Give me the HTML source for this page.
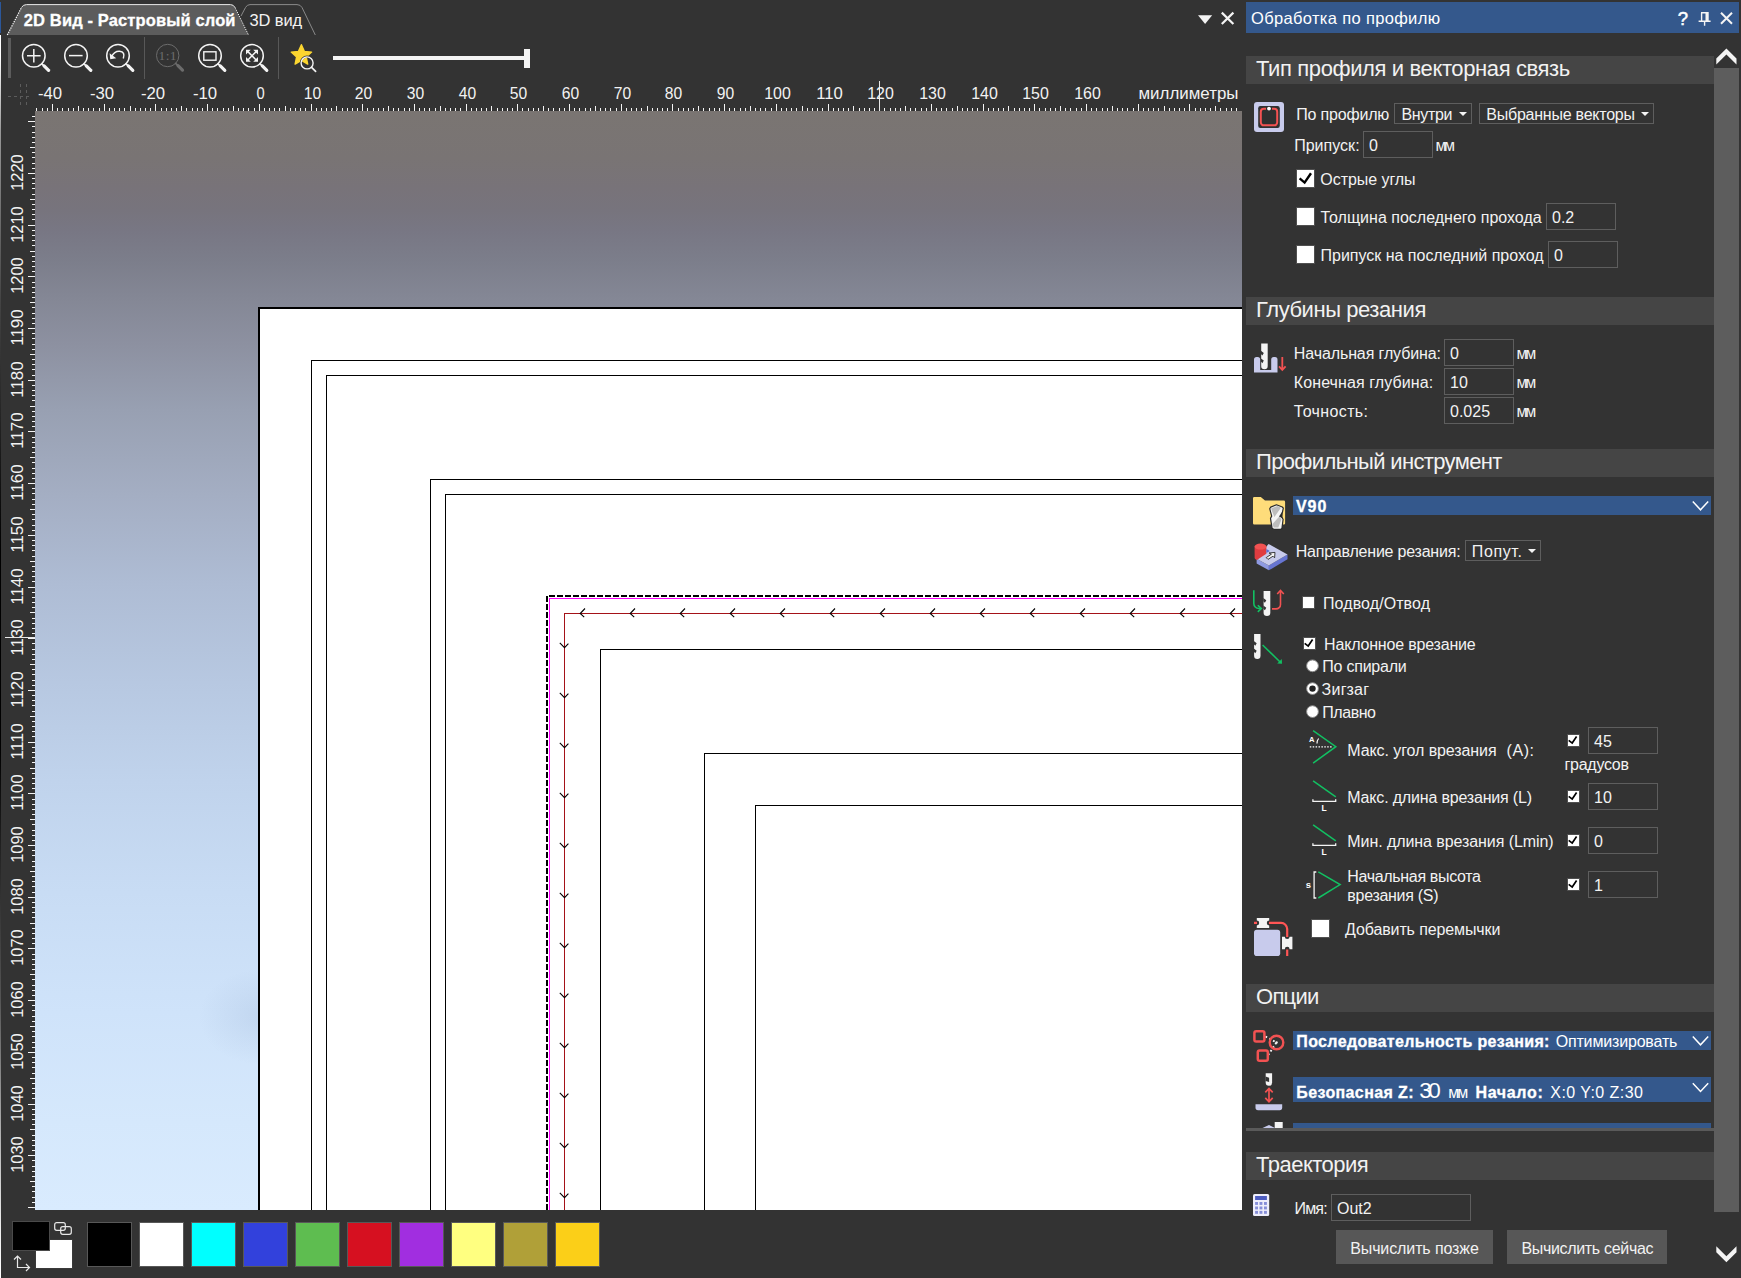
<!DOCTYPE html><html lang="ru"><head><meta charset="utf-8"><title>Обработка по профилю</title><style>html,body{margin:0;padding:0}
body{width:1741px;height:1278px;background:#333;overflow:hidden;position:relative;font-family:"Liberation Sans",sans-serif;color:#f2f2f2}
.abs,div,.t{position:absolute}
.t{white-space:pre;line-height:1;display:block}
div{box-sizing:border-box}
</style></head><body><div class="abs" style="left:35px;top:111px;width:1207px;height:1099px;overflow:hidden;background:radial-gradient(ellipse 62px 48px at 226px 906px,rgba(110,135,175,.14),rgba(110,135,175,0) 100%),linear-gradient(180deg,#7a7572 0%,#797474 4.3%,#787379 7%,#77747d 9%,#787784 11%,#7c7e8b 13.7%,#848795 17%,#8d91a1 21.4%,#98a0b2 27.2%,#a4aec3 35%,#aebcd4 43%,#b7c8e1 52%,#c0d3ec 61%,#c8dcf4 71%,#cfe3fa 82%,#d5e8fc 92%,#d9ebfe 100%)"><svg width="1207" height="1099" style="position:absolute;left:0;top:0"><rect x="223" y="196" width="1207" height="1099" fill="#000"/><rect x="225" y="198" width="1207" height="1099" fill="#fff"/><path d="M276.5 1099V249.5H1207M291.5 1099V264.5H1207M395.5 1099V368.5H1207M410.5 1099V383.5H1207M565.5 1099V538.5H1207M669.5 1099V642.5H1207M720.5 1099V694.5H1207" stroke="#000" fill="none" stroke-width="1" shape-rendering="crispEdges"/><path d="M512 485V1099" stroke="#000" stroke-width="2" stroke-dasharray="6 2" fill="none" shape-rendering="crispEdges"/><path d="M514 485H1207" stroke="#000" stroke-width="2" stroke-dasharray="6 2" fill="none" shape-rendering="crispEdges"/><path d="M514.5 1099V487.5H1207" stroke="#ff00ff" stroke-width="1" fill="none" shape-rendering="crispEdges"/><path d="M529.5 1099V502.5H1207" stroke="#a41218" stroke-width="1" fill="none" shape-rendering="crispEdges"/><path d="M550 497.5L545.2 502.5L549.2 506.2M600 497.5L595.2 502.5L599.2 506.2M650 497.5L645.2 502.5L649.2 506.2M700 497.5L695.2 502.5L699.2 506.2M750 497.5L745.2 502.5L749.2 506.2M800 497.5L795.2 502.5L799.2 506.2M850 497.5L845.2 502.5L849.2 506.2M900 497.5L895.2 502.5L899.2 506.2M950 497.5L945.2 502.5L949.2 506.2M1000 497.5L995.2 502.5L999.2 506.2M1050 497.5L1045.2 502.5L1049.2 506.2M1100 497.5L1095.2 502.5L1099.2 506.2M1150 497.5L1145.2 502.5L1149.2 506.2M1200 497.5L1195.2 502.5L1199.2 506.2M524.8 531.8L529.5 536.6L533.4 532.6M524.8 581.8L529.5 586.6L533.4 582.6M524.8 631.8L529.5 636.6L533.4 632.6M524.8 681.8L529.5 686.6L533.4 682.6M524.8 731.8L529.5 736.6L533.4 732.6M524.8 781.8L529.5 786.6L533.4 782.6M524.8 831.8L529.5 836.6L533.4 832.6M524.8 881.8L529.5 886.6L533.4 882.6M524.8 931.8L529.5 936.6L533.4 932.6M524.8 981.8L529.5 986.6L533.4 982.6M524.8 1031.8L529.5 1036.6L533.4 1032.6M524.8 1081.8L529.5 1086.6L533.4 1082.6" stroke="#000" stroke-width="1.1" fill="none"/></svg></div><svg class="abs" style="left:0;top:0" width="1242" height="1212" font-family="'Liberation Sans',sans-serif" font-size="17" fill="#f2f2f2"><path d="M36.5 108v3M42.5 108v3M47.5 108v3M52.5 104v7M57.5 108v3M62.5 108v3M68.5 108v3M73.5 108v3M78.5 106v5M83.5 108v3M88.5 108v3M93.5 108v3M99.5 108v3M104.5 104v7M109.5 108v3M114.5 108v3M119.5 108v3M124.5 108v3M130.5 106v5M135.5 108v3M140.5 108v3M145.5 108v3M150.5 108v3M155.5 104v7M161.5 108v3M166.5 108v3M171.5 108v3M176.5 108v3M181.5 106v5M186.5 108v3M192.5 108v3M197.5 108v3M202.5 108v3M207.5 104v7M212.5 108v3M217.5 108v3M223.5 108v3M228.5 108v3M233.5 106v5M238.5 108v3M243.5 108v3M248.5 108v3M254.5 108v3M259.5 104v7M264.5 108v3M269.5 108v3M274.5 108v3M279.5 108v3M285.5 106v5M290.5 108v3M295.5 108v3M300.5 108v3M305.5 108v3M311.5 104v7M316.5 108v3M321.5 108v3M326.5 108v3M331.5 108v3M336.5 106v5M342.5 108v3M347.5 108v3M352.5 108v3M357.5 108v3M362.5 104v7M367.5 108v3M373.5 108v3M378.5 108v3M383.5 108v3M388.5 106v5M393.5 108v3M398.5 108v3M404.5 108v3M409.5 108v3M414.5 104v7M419.5 108v3M424.5 108v3M429.5 108v3M435.5 108v3M440.5 106v5M445.5 108v3M450.5 108v3M455.5 108v3M460.5 108v3M466.5 104v7M471.5 108v3M476.5 108v3M481.5 108v3M486.5 108v3M491.5 106v5M497.5 108v3M502.5 108v3M507.5 108v3M512.5 108v3M517.5 104v7M522.5 108v3M528.5 108v3M533.5 108v3M538.5 108v3M543.5 106v5M548.5 108v3M553.5 108v3M559.5 108v3M564.5 108v3M569.5 104v7M574.5 108v3M579.5 108v3M585.5 108v3M590.5 108v3M595.5 106v5M600.5 108v3M605.5 108v3M610.5 108v3M616.5 108v3M621.5 104v7M626.5 108v3M631.5 108v3M636.5 108v3M641.5 108v3M647.5 106v5M652.5 108v3M657.5 108v3M662.5 108v3M667.5 108v3M672.5 104v7M678.5 108v3M683.5 108v3M688.5 108v3M693.5 108v3M698.5 106v5M703.5 108v3M709.5 108v3M714.5 108v3M719.5 108v3M724.5 104v7M729.5 108v3M734.5 108v3M740.5 108v3M745.5 108v3M750.5 106v5M755.5 108v3M760.5 108v3M765.5 108v3M771.5 108v3M776.5 104v7M781.5 108v3M786.5 108v3M791.5 108v3M796.5 108v3M802.5 106v5M807.5 108v3M812.5 108v3M817.5 108v3M822.5 108v3M828.5 104v7M833.5 108v3M838.5 108v3M843.5 108v3M848.5 108v3M853.5 106v5M859.5 108v3M864.5 108v3M869.5 108v3M874.5 108v3M879.5 104v7M884.5 108v3M890.5 108v3M895.5 108v3M900.5 108v3M905.5 106v5M910.5 108v3M915.5 108v3M921.5 108v3M926.5 108v3M931.5 104v7M936.5 108v3M941.5 108v3M946.5 108v3M952.5 108v3M957.5 106v5M962.5 108v3M967.5 108v3M972.5 108v3M977.5 108v3M983.5 104v7M988.5 108v3M993.5 108v3M998.5 108v3M1003.5 108v3M1008.5 106v5M1014.5 108v3M1019.5 108v3M1024.5 108v3M1029.5 108v3M1034.5 104v7M1039.5 108v3M1045.5 108v3M1050.5 108v3M1055.5 108v3M1060.5 106v5M1065.5 108v3M1070.5 108v3M1076.5 108v3M1081.5 108v3M1086.5 104v7M1091.5 108v3M1096.5 108v3M1102.5 108v3M1107.5 108v3M1112.5 106v5M1117.5 108v3M1122.5 108v3M1127.5 108v3M1133.5 108v3M1138.5 104v7M1143.5 108v3M1148.5 108v3M1153.5 108v3M1158.5 108v3M1164.5 106v5M1169.5 108v3M1174.5 108v3M1179.5 108v3M1184.5 108v3M1189.5 104v7M1195.5 108v3M1200.5 108v3M1205.5 108v3M1210.5 108v3M1215.5 106v5M1220.5 108v3M1226.5 108v3M1231.5 108v3M1236.5 108v3" stroke="#f4f4f4" stroke-width="1" fill="none" shape-rendering="crispEdges"/><path d="M28 1207.5h7M32 1202.5h3M32 1197.5h3M32 1191.5h3M32 1186.5h3M30 1181.5h5M32 1176.5h3M32 1171.5h3M32 1166.5h3M32 1160.5h3M28 1155.5h7M32 1150.5h3M32 1145.5h3M32 1140.5h3M32 1135.5h3M30 1129.5h5M32 1124.5h3M32 1119.5h3M32 1114.5h3M32 1109.5h3M28 1104.5h7M32 1098.5h3M32 1093.5h3M32 1088.5h3M32 1083.5h3M30 1078.5h5M32 1073.5h3M32 1067.5h3M32 1062.5h3M32 1057.5h3M28 1052.5h7M32 1047.5h3M32 1042.5h3M32 1036.5h3M32 1031.5h3M30 1026.5h5M32 1021.5h3M32 1016.5h3M32 1010.5h3M32 1005.5h3M28 1000.5h7M32 995.5h3M32 990.5h3M32 985.5h3M32 979.5h3M30 974.5h5M32 969.5h3M32 964.5h3M32 959.5h3M32 954.5h3M28 948.5h7M32 943.5h3M32 938.5h3M32 933.5h3M32 928.5h3M30 923.5h5M32 917.5h3M32 912.5h3M32 907.5h3M32 902.5h3M28 897.5h7M32 892.5h3M32 886.5h3M32 881.5h3M32 876.5h3M30 871.5h5M32 866.5h3M32 861.5h3M32 855.5h3M32 850.5h3M28 845.5h7M32 840.5h3M32 835.5h3M32 830.5h3M32 824.5h3M30 819.5h5M32 814.5h3M32 809.5h3M32 804.5h3M32 799.5h3M28 793.5h7M32 788.5h3M32 783.5h3M32 778.5h3M32 773.5h3M30 768.5h5M32 762.5h3M32 757.5h3M32 752.5h3M32 747.5h3M28 742.5h7M32 736.5h3M32 731.5h3M32 726.5h3M32 721.5h3M30 716.5h5M32 711.5h3M32 705.5h3M32 700.5h3M32 695.5h3M28 690.5h7M32 685.5h3M32 680.5h3M32 674.5h3M32 669.5h3M30 664.5h5M32 659.5h3M32 654.5h3M32 649.5h3M32 643.5h3M28 638.5h7M32 633.5h3M32 628.5h3M32 623.5h3M32 618.5h3M30 612.5h5M32 607.5h3M32 602.5h3M32 597.5h3M32 592.5h3M28 587.5h7M32 581.5h3M32 576.5h3M32 571.5h3M32 566.5h3M30 561.5h5M32 556.5h3M32 550.5h3M32 545.5h3M32 540.5h3M28 535.5h7M32 530.5h3M32 525.5h3M32 519.5h3M32 514.5h3M30 509.5h5M32 504.5h3M32 499.5h3M32 493.5h3M32 488.5h3M28 483.5h7M32 478.5h3M32 473.5h3M32 468.5h3M32 462.5h3M30 457.5h5M32 452.5h3M32 447.5h3M32 442.5h3M32 437.5h3M28 431.5h7M32 426.5h3M32 421.5h3M32 416.5h3M32 411.5h3M30 406.5h5M32 400.5h3M32 395.5h3M32 390.5h3M32 385.5h3M28 380.5h7M32 375.5h3M32 369.5h3M32 364.5h3M32 359.5h3M30 354.5h5M32 349.5h3M32 344.5h3M32 338.5h3M32 333.5h3M28 328.5h7M32 323.5h3M32 318.5h3M32 313.5h3M32 307.5h3M30 302.5h5M32 297.5h3M32 292.5h3M32 287.5h3M32 282.5h3M28 276.5h7M32 271.5h3M32 266.5h3M32 261.5h3M32 256.5h3M30 251.5h5M32 245.5h3M32 240.5h3M32 235.5h3M32 230.5h3M28 225.5h7M32 219.5h3M32 214.5h3M32 209.5h3M32 204.5h3M30 199.5h5M32 194.5h3M32 188.5h3M32 183.5h3M32 178.5h3M28 173.5h7M32 168.5h3M32 163.5h3M32 157.5h3M32 152.5h3M30 147.5h5M32 142.5h3M32 137.5h3M32 132.5h3M32 126.5h3M28 121.5h7M32 116.5h3" stroke="#f4f4f4" stroke-width="1" fill="none" shape-rendering="crispEdges"/><path d="M879.5 81v30M5 637.5h30" stroke="#e8e8e8" stroke-width="1" shape-rendering="crispEdges"/><path d="M8 96.5h22M20.5 84v22M26.5 84v22M8 96.5" stroke="#5c5c5c" stroke-width="1" stroke-dasharray="3 3" fill="none" shape-rendering="crispEdges"/><text x="50.0" y="98.6" text-anchor="middle" textLength="24.2" lengthAdjust="spacingAndGlyphs">-40</text><text x="102.0" y="98.6" text-anchor="middle" textLength="24.2" lengthAdjust="spacingAndGlyphs">-30</text><text x="153.0" y="98.6" text-anchor="middle" textLength="24.2" lengthAdjust="spacingAndGlyphs">-20</text><text x="205.0" y="98.6" text-anchor="middle" textLength="24.2" lengthAdjust="spacingAndGlyphs">-10</text><text x="260.5" y="98.6" text-anchor="middle" textLength="8.2" lengthAdjust="spacingAndGlyphs">0</text><text x="312.5" y="98.6" text-anchor="middle" textLength="17.4" lengthAdjust="spacingAndGlyphs">10</text><text x="363.5" y="98.6" text-anchor="middle" textLength="17.4" lengthAdjust="spacingAndGlyphs">20</text><text x="415.5" y="98.6" text-anchor="middle" textLength="17.4" lengthAdjust="spacingAndGlyphs">30</text><text x="467.5" y="98.6" text-anchor="middle" textLength="17.4" lengthAdjust="spacingAndGlyphs">40</text><text x="518.5" y="98.6" text-anchor="middle" textLength="17.4" lengthAdjust="spacingAndGlyphs">50</text><text x="570.5" y="98.6" text-anchor="middle" textLength="17.4" lengthAdjust="spacingAndGlyphs">60</text><text x="622.5" y="98.6" text-anchor="middle" textLength="17.4" lengthAdjust="spacingAndGlyphs">70</text><text x="673.5" y="98.6" text-anchor="middle" textLength="17.4" lengthAdjust="spacingAndGlyphs">80</text><text x="725.5" y="98.6" text-anchor="middle" textLength="17.4" lengthAdjust="spacingAndGlyphs">90</text><text x="777.5" y="98.6" text-anchor="middle" textLength="26.6" lengthAdjust="spacingAndGlyphs">100</text><text x="829.5" y="98.6" text-anchor="middle" textLength="26.6" lengthAdjust="spacingAndGlyphs">110</text><text x="880.5" y="98.6" text-anchor="middle" textLength="26.6" lengthAdjust="spacingAndGlyphs">120</text><text x="932.5" y="98.6" text-anchor="middle" textLength="26.6" lengthAdjust="spacingAndGlyphs">130</text><text x="984.5" y="98.6" text-anchor="middle" textLength="26.6" lengthAdjust="spacingAndGlyphs">140</text><text x="1035.5" y="98.6" text-anchor="middle" textLength="26.6" lengthAdjust="spacingAndGlyphs">150</text><text x="1087.5" y="98.6" text-anchor="middle" textLength="26.6" lengthAdjust="spacingAndGlyphs">160</text><text x="1138.5" y="98.6" textLength="100" lengthAdjust="spacingAndGlyphs">миллиметры</text><text transform="translate(22.8 1154.5) rotate(-90)" text-anchor="middle" textLength="36.5" lengthAdjust="spacingAndGlyphs">1030</text><text transform="translate(22.8 1103.5) rotate(-90)" text-anchor="middle" textLength="36.5" lengthAdjust="spacingAndGlyphs">1040</text><text transform="translate(22.8 1051.5) rotate(-90)" text-anchor="middle" textLength="36.5" lengthAdjust="spacingAndGlyphs">1050</text><text transform="translate(22.8 999.5) rotate(-90)" text-anchor="middle" textLength="36.5" lengthAdjust="spacingAndGlyphs">1060</text><text transform="translate(22.8 947.5) rotate(-90)" text-anchor="middle" textLength="36.5" lengthAdjust="spacingAndGlyphs">1070</text><text transform="translate(22.8 896.5) rotate(-90)" text-anchor="middle" textLength="36.5" lengthAdjust="spacingAndGlyphs">1080</text><text transform="translate(22.8 844.5) rotate(-90)" text-anchor="middle" textLength="36.5" lengthAdjust="spacingAndGlyphs">1090</text><text transform="translate(22.8 792.5) rotate(-90)" text-anchor="middle" textLength="36.5" lengthAdjust="spacingAndGlyphs">1100</text><text transform="translate(22.8 741.5) rotate(-90)" text-anchor="middle" textLength="36.5" lengthAdjust="spacingAndGlyphs">1110</text><text transform="translate(22.8 689.5) rotate(-90)" text-anchor="middle" textLength="36.5" lengthAdjust="spacingAndGlyphs">1120</text><text transform="translate(22.8 637.5) rotate(-90)" text-anchor="middle" textLength="36.5" lengthAdjust="spacingAndGlyphs">1130</text><text transform="translate(22.8 586.5) rotate(-90)" text-anchor="middle" textLength="36.5" lengthAdjust="spacingAndGlyphs">1140</text><text transform="translate(22.8 534.5) rotate(-90)" text-anchor="middle" textLength="36.5" lengthAdjust="spacingAndGlyphs">1150</text><text transform="translate(22.8 482.5) rotate(-90)" text-anchor="middle" textLength="36.5" lengthAdjust="spacingAndGlyphs">1160</text><text transform="translate(22.8 430.5) rotate(-90)" text-anchor="middle" textLength="36.5" lengthAdjust="spacingAndGlyphs">1170</text><text transform="translate(22.8 379.5) rotate(-90)" text-anchor="middle" textLength="36.5" lengthAdjust="spacingAndGlyphs">1180</text><text transform="translate(22.8 327.5) rotate(-90)" text-anchor="middle" textLength="36.5" lengthAdjust="spacingAndGlyphs">1190</text><text transform="translate(22.8 275.5) rotate(-90)" text-anchor="middle" textLength="36.5" lengthAdjust="spacingAndGlyphs">1200</text><text transform="translate(22.8 224.5) rotate(-90)" text-anchor="middle" textLength="36.5" lengthAdjust="spacingAndGlyphs">1210</text><text transform="translate(22.8 172.5) rotate(-90)" text-anchor="middle" textLength="36.5" lengthAdjust="spacingAndGlyphs">1220</text></svg><svg class="abs" style="left:0;top:0" width="1242" height="82"><path d="M7 35L21.5 7.5Q23 4.6 26.5 4.6H230.5Q233.5 4.6 235 7.5L248.5 35Z" fill="#5c5c5c"/><path d="M7.3 35L21.5 7.5" fill="none" stroke="#fff" stroke-width="1.2" stroke-dasharray="1.3 1.1"/><path d="M21.5 7.5Q23 4.6 26.5 4.6H230.5Q233.5 4.6 235 7.5" fill="none" stroke="#e8e8e8" stroke-width="1"/><path d="M235 7.5L248.5 35" fill="none" stroke="#fff" stroke-width="1" stroke-dasharray="1.2 1.2"/><path d="M241 16L245.5 7.5Q247 4.6 250 4.6H297Q300.5 4.6 302 7.5L315.3 35" fill="none" stroke="#8a8a8a" stroke-width="1"/><rect x="8" y="38" width="3" height="40" fill="#5c5c5c"/><rect x="144" y="37" width="1" height="42" fill="#585858"/><rect x="278" y="37" width="1" height="42" fill="#585858"/><circle cx="33.8" cy="55.8" r="11.3" fill="none" stroke="#f4f4f4" stroke-width="1.5"/><path d="M41.8 63.8L45.1 66.9" stroke="#f4f4f4" stroke-width="1.8" stroke-linecap="round"/><path d="M44.1 65.9L48.6 70.4" stroke="#f4f4f4" stroke-width="3.2" stroke-linecap="round"/><path d="M27 55.8h13.6M33.8 49v13.6" stroke="#f4f4f4" stroke-width="1.5"/><circle cx="76" cy="55.8" r="11.3" fill="none" stroke="#f4f4f4" stroke-width="1.5"/><path d="M84.0 63.8L87.3 66.9" stroke="#f4f4f4" stroke-width="1.8" stroke-linecap="round"/><path d="M86.3 65.9L90.8 70.4" stroke="#f4f4f4" stroke-width="3.2" stroke-linecap="round"/><path d="M69 55.6h13.6" stroke="#f4f4f4" stroke-width="1.5"/><circle cx="118" cy="55.8" r="11.3" fill="none" stroke="#f4f4f4" stroke-width="1.5"/><path d="M126.0 63.8L129.3 66.9" stroke="#f4f4f4" stroke-width="1.8" stroke-linecap="round"/><path d="M128.3 65.9L132.8 70.4" stroke="#f4f4f4" stroke-width="3.2" stroke-linecap="round"/><path d="M123.3 58.5Q125.6 52 119.5 51.3Q114.5 51 111.6 56.5" fill="none" stroke="#f4f4f4" stroke-width="1.5"/><path d="M109.6 53.2L110.3 59.3L116.2 58.2Z" fill="#f4f4f4"/><circle cx="167.7" cy="55.5" r="11.2" fill="none" stroke="#6c6c6c" stroke-width="1"/><path d="M175.6 63.4L179.0 66.6" stroke="#6c6c6c" stroke-width="1.8" stroke-linecap="round"/><path d="M178.0 65.6L182.5 70.1" stroke="#6c6c6c" stroke-width="3.2" stroke-linecap="round"/><text x="167.7" y="60.3" text-anchor="middle" font-family="'Liberation Serif',serif" font-size="13.5" fill="#6c6c6c" letter-spacing="0.3">1:1</text><circle cx="210" cy="55.8" r="11.3" fill="none" stroke="#f4f4f4" stroke-width="1.5"/><path d="M218.0 63.8L221.3 66.9" stroke="#f4f4f4" stroke-width="1.8" stroke-linecap="round"/><path d="M220.3 65.9L224.8 70.4" stroke="#f4f4f4" stroke-width="3.2" stroke-linecap="round"/><rect x="203.8" y="51.8" width="12.2" height="8.4" fill="none" stroke="#f4f4f4" stroke-width="1.4"/><circle cx="252" cy="55.8" r="11.3" fill="none" stroke="#f4f4f4" stroke-width="1.5"/><path d="M260.0 63.8L263.3 66.9" stroke="#f4f4f4" stroke-width="1.8" stroke-linecap="round"/><path d="M262.3 65.9L266.8 70.4" stroke="#f4f4f4" stroke-width="3.2" stroke-linecap="round"/><path d="M247.6 51.4L256.4 60.2M256.4 51.4L247.6 60.2" stroke="#f4f4f4" stroke-width="1.5"/><path d="M246 49.8h4.8l-4.8 4.8zM258 49.8h-4.8l4.8 4.8zM246 61.8h4.8l-4.8 -4.8zM258 61.8h-4.8l4.8 -4.8z" fill="#f4f4f4"/><polygon points="301.4,44.7 304.3,51.4 311.6,52.1 306.2,56.9 307.7,64.1 301.4,60.4 295.1,64.1 296.6,56.9 291.2,52.1 298.5,51.4" fill="#fcd630" stroke="#fcd630" stroke-width="1.4" stroke-linejoin="round"/><clipPath id="lens"><circle cx="307.1" cy="62.9" r="5.3"/></clipPath><circle cx="307.1" cy="62.9" r="7.3" fill="#333"/><g clip-path="url(#lens)"><polygon points="301.4,44.7 304.3,51.4 311.6,52.1 306.2,56.9 307.7,64.1 301.4,60.4 295.1,64.1 296.6,56.9 291.2,52.1 298.5,51.4" fill="#fcd630" stroke="#fcd630" stroke-width="1.4" stroke-linejoin="round"/></g><circle cx="307.1" cy="62.9" r="6" fill="none" stroke="#f4f4f4" stroke-width="1.4"/><path d="M311.6 67.4L315.6 71.4" stroke="#f4f4f4" stroke-width="1.7" stroke-linecap="round"/><rect x="333" y="56" width="191" height="4" fill="#f4f4f4"/><rect x="524" y="49" width="6" height="19" fill="#f4f4f4"/><path d="M1198 15.3h14.2l-7.1 8.8z" fill="#f4f4f4"/><path d="M1221.8 12.6l11.6 11.4M1233.4 12.6l-11.6 11.4" stroke="#f4f4f4" stroke-width="2.2"/></svg><span class="t" style="left:23.80px;top:12px;font-size:16.5px;font-weight:bold;-webkit-text-stroke:.3px currentColor;letter-spacing:0.128px;color:#fff;">2D Вид - Растровый слой</span><span class="t" style="left:249.50px;top:12px;font-size:16.5px;letter-spacing:-0.119px;">3D вид</span><div class="abs" style="left:0;top:2px;width:1px;height:31px;background:#2b579a"></div><div class="abs" style="left:0;top:35px;width:1px;height:1243px;background:linear-gradient(180deg,#fff 0,#fff 22px,#999 95px,#444 265px,#000 515px,#000 715px,#555 965px,#bbb 1115px,#eee 1195px,#fff 1243px)"></div><div style="left:35px;top:1239px;width:38px;height:30px;background:#fff;border:1px solid #3a3a3a;box-sizing:border-box;"></div><div style="left:12px;top:1221px;width:38px;height:30px;background:#000;border:1px solid #4a4a4a;box-sizing:border-box;"></div><div style="left:87px;top:1222px;width:45px;height:45px;background:#000000;border:1px solid #585858;box-sizing:border-box;"></div><div style="left:139px;top:1222px;width:45px;height:45px;background:#ffffff;border:1px solid #585858;box-sizing:border-box;"></div><div style="left:191px;top:1222px;width:45px;height:45px;background:#00ffff;border:1px solid #585858;box-sizing:border-box;"></div><div style="left:243px;top:1222px;width:45px;height:45px;background:#3241dc;border:1px solid #585858;box-sizing:border-box;"></div><div style="left:295px;top:1222px;width:45px;height:45px;background:#5ebd50;border:1px solid #585858;box-sizing:border-box;"></div><div style="left:347px;top:1222px;width:45px;height:45px;background:#d61020;border:1px solid #585858;box-sizing:border-box;"></div><div style="left:399px;top:1222px;width:45px;height:45px;background:#a12ee0;border:1px solid #585858;box-sizing:border-box;"></div><div style="left:451px;top:1222px;width:45px;height:45px;background:#ffff80;border:1px solid #585858;box-sizing:border-box;"></div><div style="left:503px;top:1222px;width:45px;height:45px;background:#b0a038;border:1px solid #585858;box-sizing:border-box;"></div><div style="left:555px;top:1222px;width:45px;height:45px;background:#fbcf18;border:1px solid #585858;box-sizing:border-box;"></div><svg class="abs" style="left:0;top:1215px" width="90" height="60"><rect x="54.7" y="7.7" width="10.6" height="7.6" rx="2" fill="none" stroke="#e8e8e8" stroke-width="1.2"/><rect x="60.7" y="11.7" width="10.6" height="7.6" rx="2" fill="none" stroke="#e8e8e8" stroke-width="1.2"/><path d="M17.5 41v11.5h12" fill="none" stroke="#e8e8e8" stroke-width="1.2"/><path d="M14 44.5l3.5 -3.5l3.5 3.5M26 49l3.5 3.5l-3.5 3.5" fill="none" stroke="#e8e8e8" stroke-width="1.2"/></svg><div style="left:1246px;top:2px;width:493px;height:31px;background:#34588c;"></div><span class="t" style="left:1251.00px;top:10px;font-size:16.5px;letter-spacing:0.338px;color:#fff;">Обработка по профилю</span><span class="t" style="left:1677.80px;top:10px;font-size:18.5px;color:#fff;-webkit-text-stroke:.5px #fff;">?</span><div style="left:1714px;top:68px;width:25px;height:1144px;background:#5d5d5d;"></div><div style="left:1246px;top:56px;width:468px;height:28px;background:#454545;"></div><span class="t" style="left:1256.00px;top:58px;font-size:22px;letter-spacing:-0.382px;">Тип профиля и векторная связь</span><span class="t" style="left:1296.30px;top:107px;font-size:16px;letter-spacing:-0.196px;">По профилю</span><div style="left:1394px;top:103px;width:78px;height:21px;border:1px solid #5e5e5e;box-sizing:border-box;"></div><span class="t" style="left:1401.40px;top:107px;font-size:16px;letter-spacing:-0.336px;">Внутри</span><svg class="abs" style="left:1458px;top:111px" width="10" height="6"><path d="M1 1h8l-4 4z" fill="#f4f4f4"/></svg><div style="left:1479px;top:103px;width:175px;height:21px;border:1px solid #5e5e5e;box-sizing:border-box;"></div><span class="t" style="left:1486.30px;top:107px;font-size:16px;letter-spacing:-0.236px;">Выбранные векторы</span><svg class="abs" style="left:1640px;top:111px" width="10" height="6"><path d="M1 1h8l-4 4z" fill="#f4f4f4"/></svg><span class="t" style="left:1294.20px;top:138px;font-size:16px;letter-spacing:0.017px;">Припуск:</span><div style="left:1363px;top:131px;width:70px;height:27px;border:1px solid #5e5e5e;box-sizing:border-box;"></div><span class="t" style="left:1369.00px;top:138px;font-size:16px;">0</span><span class="t" style="left:1435.50px;top:138px;font-size:16px;letter-spacing:-2.500px;">мм</span><div style="left:1296px;top:169px;width:19px;height:19px;background:#fff;border:1px solid #505050;"></div><svg class="abs" style="left:1296px;top:169px" width="19" height="19"><path d="M3.6 9.4L8.6 13.6L15 4.2" fill="none" stroke="#000" stroke-width="2.4"/></svg><span class="t" style="left:1320.30px;top:172px;font-size:16px;letter-spacing:-0.054px;">Острые углы</span><div style="left:1296px;top:207px;width:19px;height:19px;background:#fff;border:1px solid #505050;"></div><span class="t" style="left:1320.50px;top:210px;font-size:16px;letter-spacing:0.010px;">Толщина последнего прохода</span><div style="left:1546px;top:203px;width:70px;height:27px;border:1px solid #5e5e5e;box-sizing:border-box;"></div><span class="t" style="left:1552.00px;top:210px;font-size:16px;">0.2</span><div style="left:1296px;top:245px;width:19px;height:19px;background:#fff;border:1px solid #505050;"></div><span class="t" style="left:1320.50px;top:248px;font-size:16px;letter-spacing:-0.010px;">Припуск на последний проход</span><div style="left:1548px;top:241px;width:70px;height:27px;border:1px solid #5e5e5e;box-sizing:border-box;"></div><span class="t" style="left:1554.00px;top:248px;font-size:16px;">0</span><div style="left:1246px;top:297px;width:468px;height:28px;background:#454545;"></div><span class="t" style="left:1256.00px;top:299px;font-size:22px;letter-spacing:-0.435px;">Глубины резания</span><span class="t" style="left:1293.80px;top:346px;font-size:16px;letter-spacing:-0.113px;">Начальная глубина:</span><div style="left:1444px;top:339px;width:70px;height:27px;border:1px solid #5e5e5e;box-sizing:border-box;"></div><span class="t" style="left:1450.00px;top:346px;font-size:16px;">0</span><span class="t" style="left:1516.50px;top:346px;font-size:16px;letter-spacing:-2.200px;">мм</span><span class="t" style="left:1293.80px;top:375px;font-size:16px;letter-spacing:0.095px;">Конечная глубина:</span><div style="left:1444px;top:368px;width:70px;height:27px;border:1px solid #5e5e5e;box-sizing:border-box;"></div><span class="t" style="left:1450.00px;top:375px;font-size:16px;">10</span><span class="t" style="left:1516.50px;top:375px;font-size:16px;letter-spacing:-2.200px;">мм</span><span class="t" style="left:1293.80px;top:404px;font-size:16px;letter-spacing:0.370px;">Точность:</span><div style="left:1444px;top:397px;width:70px;height:27px;border:1px solid #5e5e5e;box-sizing:border-box;"></div><span class="t" style="left:1450.00px;top:404px;font-size:16px;">0.025</span><span class="t" style="left:1516.50px;top:404px;font-size:16px;letter-spacing:-2.200px;">мм</span><div style="left:1246px;top:449px;width:468px;height:28px;background:#454545;"></div><span class="t" style="left:1256.00px;top:451px;font-size:22px;letter-spacing:-0.643px;">Профильный инструмент</span><div style="left:1293px;top:496px;width:418px;height:19px;background:#34588c;"></div><span class="t" style="left:1296.00px;top:499px;font-size:16px;font-weight:bold;-webkit-text-stroke:.3px currentColor;letter-spacing:0.910px;color:#fff;">V90</span><span class="t" style="left:1295.70px;top:544px;font-size:16px;letter-spacing:-0.214px;">Направление резания:</span><div style="left:1465px;top:540px;width:76px;height:21px;border:1px solid #5e5e5e;box-sizing:border-box;"></div><span class="t" style="left:1471.80px;top:544px;font-size:16px;letter-spacing:0.624px;">Попут.</span><svg class="abs" style="left:1527px;top:548px" width="10" height="6"><path d="M1 1h8l-4 4z" fill="#f4f4f4"/></svg><div style="left:1302px;top:596px;width:13px;height:13px;background:#fff;border:1px solid #505050;"></div><span class="t" style="left:1323.00px;top:596px;font-size:16px;letter-spacing:0.091px;">Подвод/Отвод</span><div style="left:1303px;top:637px;width:13px;height:13px;background:#fff;border:1px solid #505050;"></div><svg class="abs" style="left:1303px;top:637px" width="13" height="13"><path d="M1.7 6.4L5.2 9.1L9.6 2.6" fill="none" stroke="#000" stroke-width="1.7"/></svg><span class="t" style="left:1324.10px;top:637px;font-size:16px;letter-spacing:-0.188px;">Наклонное врезание</span><span class="t" style="left:1322.20px;top:659px;font-size:16px;letter-spacing:-0.213px;">По спирали</span><span class="t" style="left:1321.60px;top:682px;font-size:16px;letter-spacing:0.216px;">Зигзаг</span><span class="t" style="left:1322.20px;top:705px;font-size:16px;letter-spacing:-0.432px;">Плавно</span><span class="t" style="left:1347.30px;top:743px;font-size:16px;letter-spacing:-0.087px;">Макс. угол врезания </span><span class="t" style="left:1506.50px;top:743px;font-size:16px;letter-spacing:0.580px;">(A):</span><div style="left:1567px;top:734px;width:13px;height:13px;background:#fff;border:1px solid #505050;"></div><svg class="abs" style="left:1567px;top:734px" width="13" height="13"><path d="M1.7 6.4L5.2 9.1L9.6 2.6" fill="none" stroke="#000" stroke-width="1.7"/></svg><div style="left:1588px;top:727px;width:70px;height:27px;border:1px solid #5e5e5e;box-sizing:border-box;"></div><span class="t" style="left:1594.00px;top:734px;font-size:16px;">45</span><span class="t" style="left:1564.50px;top:757px;font-size:16px;letter-spacing:-0.266px;">градусов</span><span class="t" style="left:1347.30px;top:790px;font-size:16px;letter-spacing:-0.182px;">Макс. длина врезания (L)</span><div style="left:1567px;top:790px;width:13px;height:13px;background:#fff;border:1px solid #505050;"></div><svg class="abs" style="left:1567px;top:790px" width="13" height="13"><path d="M1.7 6.4L5.2 9.1L9.6 2.6" fill="none" stroke="#000" stroke-width="1.7"/></svg><div style="left:1588px;top:783px;width:70px;height:27px;border:1px solid #5e5e5e;box-sizing:border-box;"></div><span class="t" style="left:1594.00px;top:790px;font-size:16px;">10</span><span class="t" style="left:1347.30px;top:834px;font-size:16px;letter-spacing:-0.072px;">Мин. длина врезания (Lmin)</span><div style="left:1567px;top:834px;width:13px;height:13px;background:#fff;border:1px solid #505050;"></div><svg class="abs" style="left:1567px;top:834px" width="13" height="13"><path d="M1.7 6.4L5.2 9.1L9.6 2.6" fill="none" stroke="#000" stroke-width="1.7"/></svg><div style="left:1588px;top:827px;width:70px;height:27px;border:1px solid #5e5e5e;box-sizing:border-box;"></div><span class="t" style="left:1594.00px;top:834px;font-size:16px;">0</span><span class="t" style="left:1347.30px;top:869px;font-size:16px;letter-spacing:-0.329px;">Начальная высота</span><span class="t" style="left:1347.30px;top:888px;font-size:16px;letter-spacing:-0.282px;">врезания (S)</span><div style="left:1567px;top:878px;width:13px;height:13px;background:#fff;border:1px solid #505050;"></div><svg class="abs" style="left:1567px;top:878px" width="13" height="13"><path d="M1.7 6.4L5.2 9.1L9.6 2.6" fill="none" stroke="#000" stroke-width="1.7"/></svg><div style="left:1588px;top:871px;width:70px;height:27px;border:1px solid #5e5e5e;box-sizing:border-box;"></div><span class="t" style="left:1594.00px;top:878px;font-size:16px;">1</span><div style="left:1311px;top:919px;width:19px;height:19px;background:#fff;border:1px solid #505050;"></div><span class="t" style="left:1345.00px;top:922px;font-size:16px;letter-spacing:-0.111px;">Добавить перемычки</span><div style="left:1246px;top:984px;width:468px;height:28px;background:#454545;"></div><span class="t" style="left:1256.00px;top:986px;font-size:22px;letter-spacing:-0.730px;">Опции</span><div style="left:1293px;top:1031px;width:418px;height:19px;background:#34588c;"></div><span class="t" style="left:1296.30px;top:1034px;font-size:16px;font-weight:bold;-webkit-text-stroke:.3px currentColor;letter-spacing:0.361px;color:#fff;">Последовательность резания:</span><span class="t" style="left:1555.70px;top:1034px;font-size:16px;letter-spacing:-0.171px;color:#fff;">Оптимизировать</span><div style="left:1293px;top:1077px;width:418px;height:25px;background:#34588c;"></div><span class="t" style="left:1296.30px;top:1085px;font-size:16px;font-weight:bold;-webkit-text-stroke:.3px currentColor;letter-spacing:0.380px;color:#fff;">Безопасная Z:</span><span class="t" style="left:1419.30px;top:1080px;font-size:22.5px;letter-spacing:-3.531px;color:#fff;">30</span><span class="t" style="left:1448.30px;top:1085px;font-size:16px;letter-spacing:-2.100px;color:#fff;">мм</span><span class="t" style="left:1475.50px;top:1085px;font-size:16px;font-weight:bold;-webkit-text-stroke:.3px currentColor;letter-spacing:0.653px;color:#fff;">Начало:</span><span class="t" style="left:1550.30px;top:1085px;font-size:16px;letter-spacing:0.440px;color:#fff;">X:0 Y:0 Z:30</span><div style="left:1293px;top:1123px;width:418px;height:5px;background:#34588c;"></div><div style="left:1246px;top:1128px;width:468px;height:3px;background:#5a5a5a;"></div><div style="left:1246px;top:1152px;width:468px;height:28px;background:#454545;"></div><span class="t" style="left:1256.00px;top:1154px;font-size:22px;letter-spacing:-0.502px;">Траектория</span><span class="t" style="left:1294.50px;top:1201px;font-size:16px;letter-spacing:-0.833px;">Имя:</span><div style="left:1331px;top:1194px;width:140px;height:27px;border:1px solid #5e5e5e;box-sizing:border-box;"></div><span class="t" style="left:1337.00px;top:1201px;font-size:16px;">Out2</span><div style="left:1336px;top:1230px;width:157px;height:34px;background:#575757;"></div><span class="t" style="left:1350.20px;top:1241px;font-size:16px;letter-spacing:-0.111px;">Вычислить позже</span><div style="left:1507px;top:1230px;width:160px;height:34px;background:#575757;"></div><span class="t" style="left:1521.40px;top:1241px;font-size:16px;letter-spacing:-0.321px;">Вычислить сейчас</span><svg class="abs" style="left:0;top:0;pointer-events:none" width="1741" height="1278"><rect x="1254" y="102" width="30" height="30" rx="3" fill="#c8cbec"/><rect x="1258.2" y="106" width="21.6" height="22" rx="2.2" fill="#2e3030"/><path d="M1266 108.7h-2.2a3 3 0 0 0 -3 3v10.6a3 3 0 0 0 3 3h10.4a3 3 0 0 0 3 -3v-10.6a3 3 0 0 0 -3 -3h-2.2" fill="none" stroke="#f25252" stroke-width="2"/><circle cx="1269" cy="108.6" r="1.9" fill="#fff"/><path d="M1254 359.5a2.5 2.5 0 0 1 2.5 -2.5h1.2a2.5 2.5 0 0 1 2.5 2.5v10.4h11v-10.4a2.5 2.5 0 0 1 2.5 -2.5h1.3a2.5 2.5 0 0 1 2.5 2.5v13h-23.5z" fill="#c8cbec"/><path d="M1261.2 343.5h6.5v22.45a3.25 3.25 0 0 1 -6.5 0z" fill="#f4f4f4"/><path d="M1260.9 350.7l2.9 2.2l-1.4 2.6l-1.5 -1.6zM1260.9 358.4l2.9 2.2l-1.4 2.6l-1.5 -1.6z" fill="#333"/><path d="M1282.3 357v12.5M1279 366.3l3.3 3.7l3.3 -3.7" fill="none" stroke="#f25252" stroke-width="1.8"/><path d="M1253 498.2a1.2 1.2 0 0 1 1.2 -1.2h6.6l4.2 3.6h18.8a1.3 1.3 0 0 1 1.3 1.3v21.4a1.2 1.2 0 0 1 -1.2 1.2h-29.7a1.2 1.2 0 0 1 -1.2 -1.2z" fill="#fedc7a"/><path d="M1276.5 504.8l5.8 2.2l1 1.2l-1.8 8.5l1.6 2.6l-1.2 9.2l-1 .8h-7.2l-1.6 -1l-1.6 -10l1.2 -2.2l-2 -7.4l1 -1.6z" fill="#f4f4f4" stroke="#2a2a2a" stroke-width="1.2" stroke-linejoin="round"/><path d="M1271 508.5l3.4 8.5l6.5 -9.2l-3.6 -1.7zM1272.5 524l6.8 -7.6l2.2 2.8l-3.2 8.4h-4.6z" fill="#bdbdbd"/><path d="M1279 516.5l3 -4.5l.6 6.2z" fill="#2a2a2a"/><path d="M1256.6 558.7l12.3 6.7v4.9l-12.3 -6.7z" fill="#8f9ae2"/><path d="M1268.9 565.4l18.6 -11v4.9l-18.6 11z" fill="#6775d2"/><path d="M1268.5 543.9l19 10.5l-18.6 11l-12.3 -6.7z" fill="#c8cbec"/><path d="M1254.6 546.5v11.5a5.9 2.6 0 0 0 2.2 2l9.6 -6.2v-7.3z" fill="#e03c40"/><ellipse cx="1260.5" cy="546.6" rx="5.9" ry="3" fill="#f25252"/><path d="M1266.4 549v4l3.4 -2z" fill="#5d6cd0"/><path d="M1266.2 557.6l5.2 -3.4l-2.4 -1.2l6 -.6l-.4 5.4l-1.6 -1.6l-5 3.2z" fill="#f4f4f4" stroke="#2a2a2a" stroke-width=".9" stroke-linejoin="round"/><path d="M1253.8 590.3v13.2a5 5 0 0 0 5 5h2" fill="none" stroke="#12c062" stroke-width="1.6"/><path d="M1257.8 605.2l3.5 3.4l-3.5 3.2" fill="none" stroke="#12c062" stroke-width="1.6"/><path d="M1263.6 591h6.7v21.65a3.35 3.35 0 0 1 -6.7 0z" fill="#f4f4f4"/><path d="M1263.3 598.0l3.0 2.2l-1.4 2.6l-1.6 -1.6zM1263.3 605.5l3.0 2.2l-1.4 2.6l-1.6 -1.6z" fill="#333"/><path d="M1272 608.9h4a4.5 4.5 0 0 0 4.5 -4.5v-13.5" fill="none" stroke="#f25252" stroke-width="1.6"/><path d="M1277.2 594l3.3 -3.6l3.3 3.6" fill="none" stroke="#f25252" stroke-width="1.6"/><path d="M1254.1 634h6.4v21.8a3.2 3.2 0 0 1 -6.4 0z" fill="#f4f4f4"/><path d="M1253.8 641.0l2.9 2.2l-1.4 2.6l-1.5 -1.6zM1253.8 648.5l2.9 2.2l-1.4 2.6l-1.5 -1.6z" fill="#333"/><path d="M1262.6 645l17.5 17" stroke="#12c062" stroke-width="1.6"/><path d="M1282 663.8l-4.8 -.3l4.6 -4.6z" fill="#12c062"/><path d="M1313.1 730.7l22.7 16l-22.7 16.4" fill="none" stroke="#12c062" stroke-width="1.5"/><path d="M1309.8 746.9h22" stroke="#fff" stroke-width="1.4" stroke-dasharray="1.5 1.4"/><text x="1309" y="741.8" font-size="7.6" font-weight="bold" fill="#fff" font-family="'Liberation Sans',sans-serif">A</text><path d="M1318.6 738.5q-1.6 2 -1.6 5" stroke="#fff" stroke-width="1.2" fill="none"/><path d="M1313.1 780.9l22.7 16" stroke="#12c062" stroke-width="1.5"/><path d="M1312.9 799.2v2.2h22.8v-2.2" fill="none" stroke="#f4f4f4" stroke-width="1.3"/><text x="1321.6" y="811" font-size="8.5" font-weight="bold" fill="#fff" font-family="'Liberation Sans',sans-serif">L</text><path d="M1313.1 824.9l22.7 16" stroke="#12c062" stroke-width="1.5"/><path d="M1312.9 843.2v2.2h22.8v-2.2" fill="none" stroke="#f4f4f4" stroke-width="1.3"/><text x="1321.6" y="855" font-size="8.5" font-weight="bold" fill="#fff" font-family="'Liberation Sans',sans-serif">L</text><path d="M1318.3 871.8l21.8 12.8l-21.8 13.4" fill="none" stroke="#12c062" stroke-width="1.5"/><path d="M1316.3 872h-2.2v26h2.2" fill="none" stroke="#f4f4f4" stroke-width="1.3"/><text x="1305.8" y="888.4" font-size="9.5" font-weight="bold" fill="#fff" font-family="'Liberation Sans',sans-serif">s</text><rect x="1254" y="929.8" width="26.2" height="26.3" rx="2.8" fill="#c8cbec"/><path d="M1254 922.9h3M1269 922.9h12a6.2 6.2 0 0 1 6.2 6.2v8M1287.2 949.5v6.5" fill="none" stroke="#ff5555" stroke-width="2.2"/><path d="M1256.8 918h12.4v2.6a2.4 2.4 0 0 0 0 4.8v2.6h-12.4v-2.6a2.4 2.4 0 0 0 0 -4.8z" fill="#f4f4f4"/><path d="M1282 936.7h2.8a2.4 2.4 0 0 0 4.8 0h2.8v12.5h-2.8a2.4 2.4 0 0 0 -4.8 0h-2.8z" fill="#f4f4f4"/><path d="M1265.5 1036.5l11 6l-8.5 12.8" fill="none" stroke="#f8f8f8" stroke-width="1.9" stroke-dasharray="1.8 2.5"/><rect x="1254.4" y="1031.3" width="10" height="10.3" rx="1.8" fill="none" stroke="#f25252" stroke-width="2.5"/><rect x="1257.8" y="1050.4" width="10" height="10.3" rx="1.8" fill="none" stroke="#f25252" stroke-width="2.5"/><circle cx="1276.5" cy="1042.5" r="6.8" fill="none" stroke="#f25252" stroke-width="2.4"/><circle cx="1276.6" cy="1042.4" r="1.2" fill="#f4f4f4"/><path d="M1265.7 1073.3h6.4v9.3a3.2 3.2 0 0 1 -6.4 0z" fill="#f4f4f4"/><path d="M1265.5 1076.5l3.6 1.2v4.2l-3.6 -1z" fill="#333"/><path d="M1269 1089v12M1265.3 1092.4l3.7 -4l3.7 4M1265.3 1097.8l3.7 4l3.7 -4" fill="none" stroke="#f25252" stroke-width="1.7"/><path d="M1255.5 1104.2h26.7v3.4a2.6 2.6 0 0 1 -2.6 2.6h-21.5a2.6 2.6 0 0 1 -2.6 -2.6z" fill="#c8cbec"/><path d="M1262.5 1128l6.5 -3l6 3z" fill="#c8cbec"/><rect x="1274.7" y="1122" width="8" height="6" fill="#f4f4f4"/><rect x="1253" y="1194" width="16.2" height="22" rx="1.6" fill="#eeeefb"/><rect x="1255.1" y="1196" width="11.8" height="4" fill="#4d5cc0"/><rect x="1255.1" y="1202.0" width="2.9" height="2.9" fill="#868ed8"/><rect x="1255.1" y="1206.5" width="2.9" height="2.9" fill="#868ed8"/><rect x="1255.1" y="1210.9" width="2.9" height="2.9" fill="#868ed8"/><rect x="1259.5" y="1202.0" width="2.9" height="2.9" fill="#868ed8"/><rect x="1259.5" y="1206.5" width="2.9" height="2.9" fill="#868ed8"/><rect x="1259.5" y="1210.9" width="2.9" height="2.9" fill="#868ed8"/><rect x="1264.0" y="1202.0" width="2.9" height="2.9" fill="#868ed8"/><rect x="1264.0" y="1206.5" width="2.9" height="2.9" fill="#868ed8"/><rect x="1264.0" y="1210.9" width="2.9" height="2.9" fill="#868ed8"/><circle cx="1312.5" cy="665.8" r="5.9" fill="#fff" stroke="#8a8a8a" stroke-width="1"/><circle cx="1312.5" cy="688.6" r="5.9" fill="#fff" stroke="#8a8a8a" stroke-width="1"/><circle cx="1312.5" cy="688.6" r="3.2" fill="#222"/><circle cx="1312.5" cy="711.6" r="5.9" fill="#fff" stroke="#8a8a8a" stroke-width="1"/><path d="M1692.8 501.5l7.7 8.3l7.7 -8.3" fill="none" stroke="#fff" stroke-width="1.5"/><path d="M1692.8 1036.5l7.7 8.3l7.7 -8.3" fill="none" stroke="#fff" stroke-width="1.5"/><path d="M1692.8 1083.2l7.7 8.3l7.7 -8.3" fill="none" stroke="#fff" stroke-width="1.5"/><path d="M1716.3 58.5l10.1 -10l10.1 10v6l-10.1 -10l-10.1 10z" fill="#f4f4f4"/><path d="M1716.3 1252.3l10.1 10l10.1 -10v-6l-10.1 10l-10.1 -10z" fill="#f4f4f4"/><path d="M1721 12.8l11 11M1732 12.8l-11 11" stroke="#f4f4f4" stroke-width="2"/><path d="M1701 12.8h7v8.4M1701.6 12.8v8.4M1698.6 21.2h12M1704.6 21.2v4.6" fill="none" stroke="#f4f4f4" stroke-width="1.4"/><rect x="1705.5" y="13" width="2.5" height="8" fill="#f4f4f4"/></svg></body></html>
